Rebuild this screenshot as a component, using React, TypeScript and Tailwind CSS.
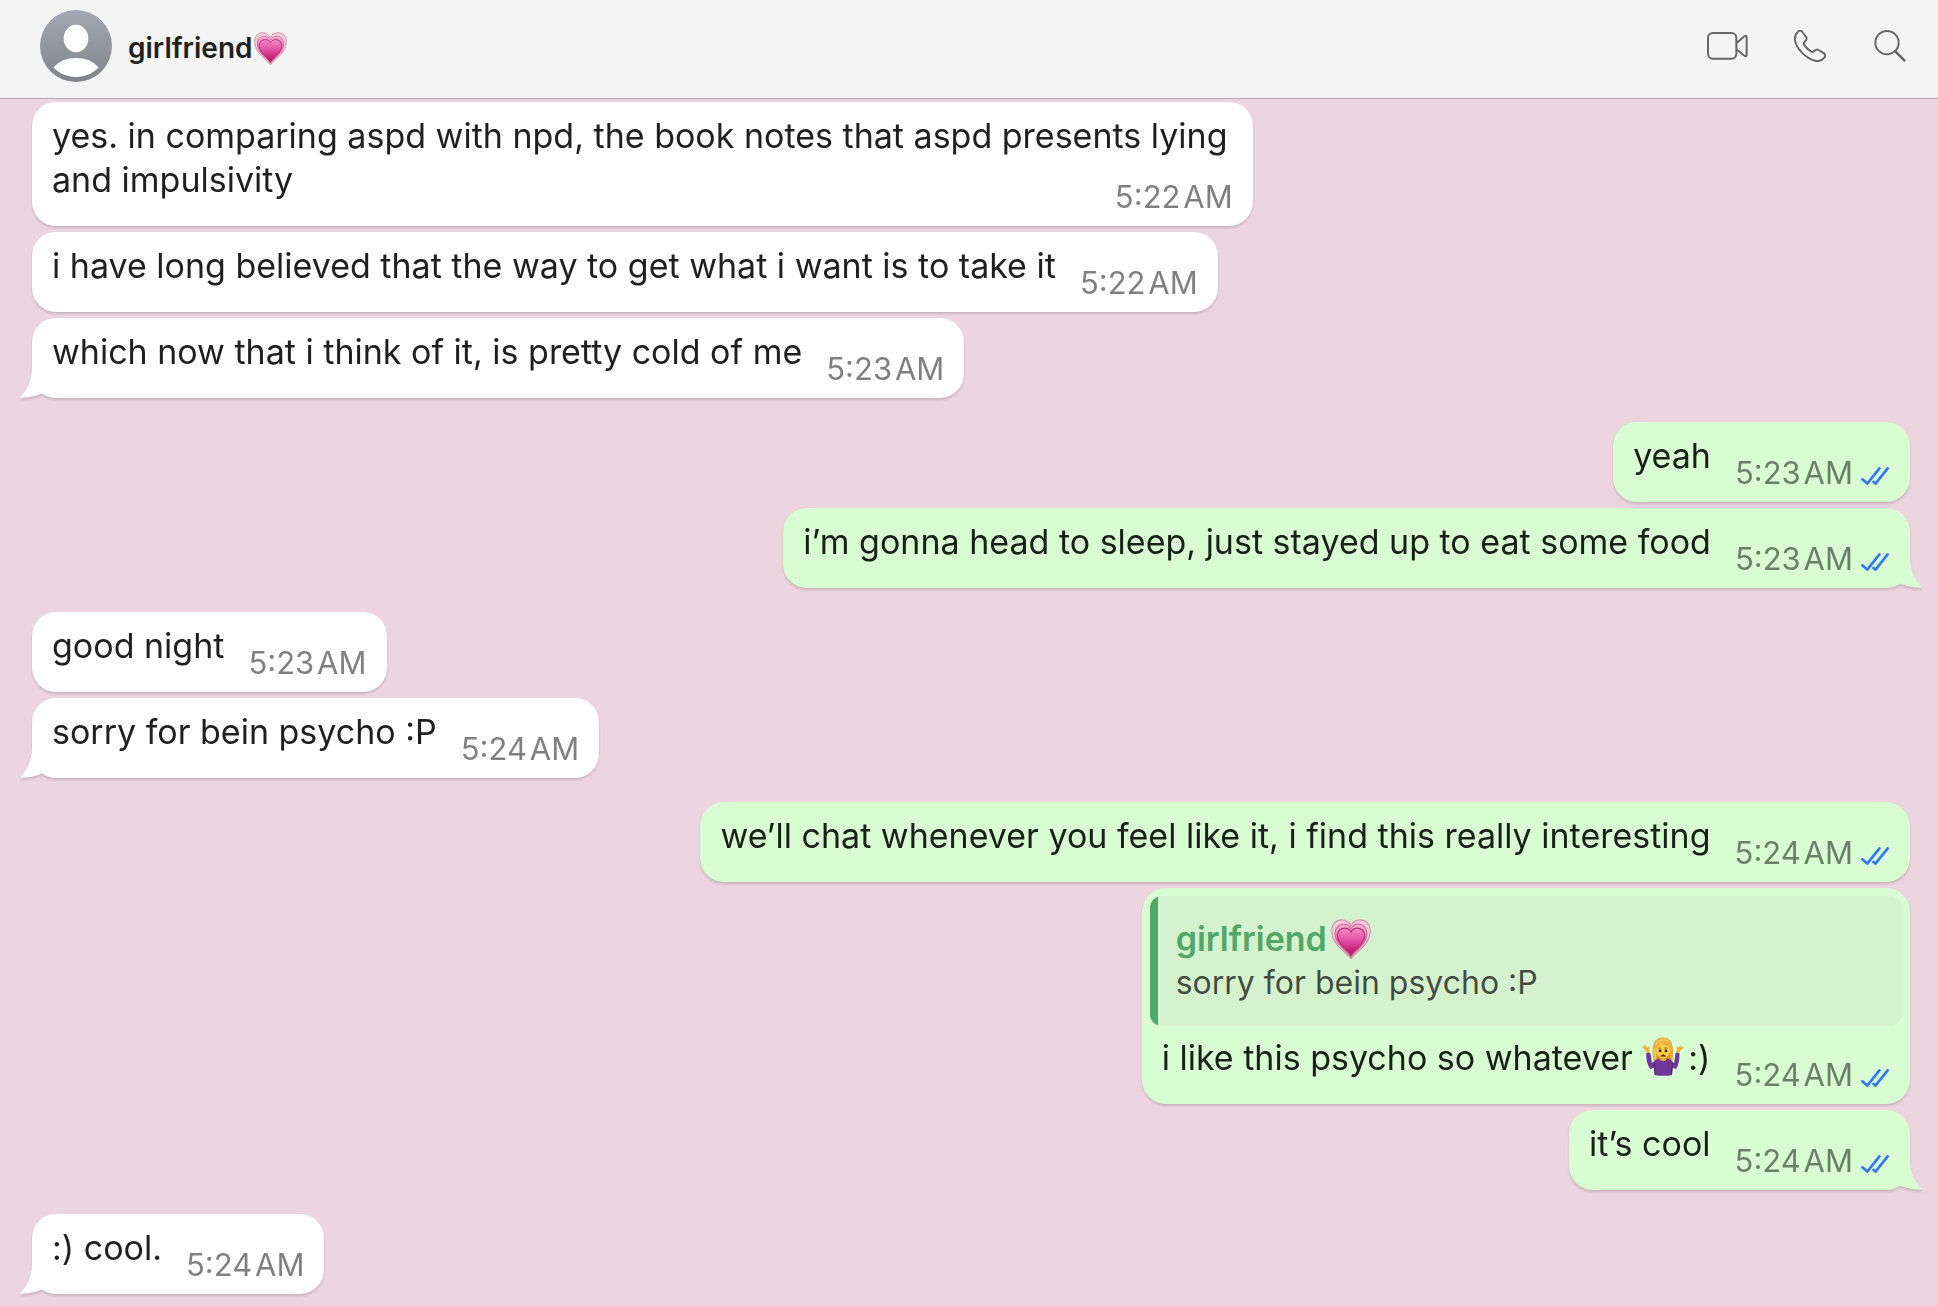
import React from "react";

type Message = {
  from: "me" | "them";
  text: React.ReactNode;
  time: string;
  tail?: boolean;
  wraps?: boolean;
  quote?: { text: string };
};

function GrowingHeart({ className }: { className: string }) {
  return (
    <svg viewBox="0 0 100 100" className={className} role="img" aria-label="growing heart">
      <defs>
        <linearGradient id="heartFill" x1="0" y1="0" x2="0" y2="1">
          <stop offset="0" stopColor="#f58cc6" />
          <stop offset="0.5" stopColor="#e0489f" />
          <stop offset="1" stopColor="#b50b55" />
        </linearGradient>
        <linearGradient id="heartMiddle" x1="0" y1="0" x2="0" y2="1">
          <stop offset="0" stopColor="#f3b4d2" />
          <stop offset="1" stopColor="#cc2f78" />
        </linearGradient>
      </defs>
      <path d="M50 99C41 84 2 66 2 30C2 12 13 2 27 2C38 2 46 8 50 17C54 8 62 2 73 2C87 2 98 12 98 30C98 66 59 84 50 99Z" fill="#f0cddb" stroke="#d592af" strokeWidth="3" />
      <path d="M50 95C42 80 10 64 10 36C10 21 20 13 31 13C40 13 47 18 50 25C53 18 60 13 69 13C80 13 90 21 90 36C90 64 58 80 50 95Z" fill="url(#heartMiddle)" stroke="#cf6fa0" strokeWidth="3" />
      <path d="M50 91C43 77 16 64 16 41C16 29 25 23 34 23C42 23 47 27 50 33C53 27 58 23 66 23C75 23 84 29 84 41C84 64 57 77 50 91Z" fill="url(#heartFill)" stroke="#c12c7c" strokeWidth="3" />
    </svg>
  );
}

function ShrugWoman({ className }: { className: string }) {
  return (
    <svg viewBox="0 0 128 118" className={className} role="img" aria-label="woman shrugging">
      <path d="M38 82C31 60 29 25 41 11C52 -2 80 -1 88 14C98 32 94 64 91 82Z" fill="#d9962d" />
      <path d="M13 49C18 45 24 46 26 50L30 79L43 69C52 62 78 62 86 69L98 79L102 50C105 46 110 46 114 49C115 66 111 86 104 97L94 93L91 115C76 119 53 119 39 115L36 93L25 97C16 84 12 66 13 49Z" fill="#713699" />
      <path d="M40 115L38 79M90 115L92 79" stroke="#4c2372" strokeWidth="3" fill="none" />
      <path d="M54 56H75V68C70 75 59 75 54 68Z" fill="#e8a92e" />
      <ellipse cx="64" cy="39" rx="22" ry="25" fill="#fccb47" />
      <path d="M36 73C32 51 30 18 46 7C60 -3 80 1 87 14C96 32 93 57 90 72C84 56 89 36 80 25C70 26 61 21 57 15C56 26 48 31 44 35C45 52 47 65 36 73Z" fill="#eab13e" />
      <path d="M42 23C49 9 66 4 79 12M39 38C39 48 41 60 39 65" stroke="#ffe18a" strokeWidth="3" fill="none" />
      <path d="M50 35Q54 31 59 34M69 34Q74 31 78 35" stroke="#805221" strokeWidth="3" fill="none" />
      <circle cx="55" cy="42" r="4" fill="#35251c" />
      <circle cx="73" cy="42" r="4" fill="#35251c" />
      <path d="M57 58Q64 49 72 58Z" fill="#4c2b1f" stroke="#4c2b1f" strokeWidth="2" />
      <path d="M15 47L10 39L1 31C1 27 5 27 10 31L5 24C7 22 10 24 14 30L16 34C19 28 23 28 23 32L21 40L25 47Z" fill="#f0b132" />
      <path d="M113 47L118 39L127 33C127 29 123 28 118 32L121 26C118 24 115 27 112 32C110 28 106 28 105 33L107 39L103 47Z" fill="#f0b132" />
    </svg>
  );
}

function ReadChecks() {
  return (
    <svg viewBox="0 0 85 54" className="mr-px mb-0.5 ml-2 h-[18px] w-7 shrink-0" fill="none" stroke="#3277f3" strokeWidth="8" strokeLinecap="round" strokeLinejoin="round" role="img" aria-label="Read">
      <path d="M4 37L19 50L56 4" />
      <path d="M38 45L44 50L81 4" />
    </svg>
  );
}

function Tail({ mine }: { mine: boolean }) {
  return (
    <svg
      viewBox="0 0 36 30"
      className={mine ? "absolute -right-3 bottom-0 h-[30px] w-9 -scale-x-100 fill-[#d8fdd2]" : "absolute bottom-0 -left-3 h-[30px] w-9 fill-white"}
      aria-hidden="true"
    >
      <path d="M12 0C12 12 7 22 0 29.5C8 30 16 28 21 26L36 14V0Z" />
    </svg>
  );
}

function Bubble({ message }: { message: Message }) {
  const mine = message.from === "me";
  return (
    <article
      className={`relative max-w-[65%] rounded-3xl drop-shadow-[0_2px_1px_rgba(90,60,75,0.22)] ${mine ? "self-end bg-[#d8fdd2]" : "self-start bg-white"}`}
    >
      {message.tail && <Tail mine={mine} />}
      {message.quote && (
        <div className="px-2 pt-2">
          <blockquote className="overflow-hidden rounded-xl bg-[#d5f2ce]">
            <div className="border-l-8 border-[#51a866] pt-[21px] pb-[21px] pl-[18px]">
              <p className="flex items-center text-[34px] leading-[44px] font-semibold text-[#51a866]">
                girlfriend
                <GrowingHeart className="ml-1 size-10" />
              </p>
              <p className="text-[32px] leading-[44px] text-black/70">{message.quote.text}</p>
            </div>
          </blockquote>
        </div>
      )}
      <div
        className={`relative px-5 ${message.wraps ? "grid" : "flex items-end justify-between gap-6"} ${message.quote ? "pt-2.5" : "pt-3"}`}
      >
        <p className="col-start-1 row-start-1 pb-6 text-[34px] leading-[44px] text-black/88">{message.text}</p>
        <div className="col-start-1 row-start-1 flex items-end self-end justify-self-end pb-[9px] whitespace-nowrap">
          <time className="text-[31px] leading-10 text-black/50">{message.time}{"\u200A"}AM</time>
          {mine && (
            <span className="pb-1.5">
              <ReadChecks />
            </span>
          )}
        </div>
      </div>
    </article>
  );
}

const groups: Message[][] = [
  [
    { from: "them", text: "yes. in comparing aspd with npd, the book notes that aspd presents lying and impulsivity", time: "5:22", wraps: true },
    { from: "them", text: "i have long believed that the way to get what i want is to take it", time: "5:22" },
    { from: "them", text: "which now that i think of it, is pretty cold of me", time: "5:23", tail: true },
  ],
  [
    { from: "me", text: "yeah", time: "5:23" },
    { from: "me", text: "i’m gonna head to sleep, just stayed up to eat some food", time: "5:23", tail: true },
  ],
  [
    { from: "them", text: "good night", time: "5:23" },
    { from: "them", text: "sorry for bein psycho :P", time: "5:24", tail: true },
  ],
  [
    { from: "me", text: "we’ll chat whenever you feel like it, i find this really interesting", time: "5:24" },
    {
      from: "me",
      text: (
        <>
          i like this psycho so whatever <ShrugWoman className="-mt-2 mr-1 inline h-[39px] w-[42px]" />
          :)
        </>
      ),
      time: "5:24",
      quote: { text: "sorry for bein psycho :P" },
    },
    { from: "me", text: "it’s cool", time: "5:24", tail: true },
  ],
  [{ from: "them", text: ":) cool.", time: "5:24", tail: true }],
];

function Header() {
  return (
    <header className="flex items-start justify-between border-b border-[#b9a9b1] bg-[#f4f4f4] pt-2.5 pr-8 pb-4 pl-10">
      <div className="flex items-center gap-4">
        <svg viewBox="0 0 72 72" className="size-[72px]" role="img" aria-label="Contact photo">
          <defs>
            <linearGradient id="avatar" x1="0" y1="0" x2="0" y2="1">
              <stop offset="0" stopColor="#a4a8b4" />
              <stop offset="1" stopColor="#808389" />
            </linearGradient>
          </defs>
          <circle cx="36" cy="36" r="36" fill="url(#avatar)" />
          <ellipse cx="36" cy="28.500" rx="12.300" ry="13.700" fill="#fff" />
          <path d="M13.500 57.500C19 51 27 48 36 48C45 48 53 51 58.500 57.500C52.500 63.500 45 67 36 67C27 67 19.500 63.500 13.500 57.500Z" fill="#fff" />
        </svg>
        <h1 className="flex items-center pt-1 text-[28px] leading-8 font-semibold text-[#1f1f1f]">
          girlfriend
          <GrowingHeart className="ml-0.5 size-[33px]" />
        </h1>
      </div>
      <nav className="flex h-[72px] items-center text-[#666]" aria-label="Chat actions">
        <button type="button" aria-label="Video call" className="mr-[46px]">
          <svg viewBox="0 0 123 84" className="h-7 w-[41px]" fill="none" stroke="currentColor" strokeWidth="6" strokeLinejoin="round">
            <rect x="3" y="3" width="85" height="77" rx="14" />
            <path d="M88 34L112 13Q119 8 119 17V67Q119 76 112 71L88 52" />
          </svg>
        </button>
        <button type="button" aria-label="Voice call" className="mr-12">
          <svg viewBox="0 0 96 96" className="size-8" fill="none" stroke="currentColor" strokeWidth="6" strokeLinejoin="round">
            <path d="M12 5C16 1 22 2 25 6L36 21C38 24 38 28 36 31L30 38C29 40 29 42 30 44C36 53 44 61 52 65C54 66 56 66 58 65L65 60C68 58 71 58 74 60L90 70C94 73 95 78 91 83C84 92 76 94 66 93C36 86 6 56 3 30C2 20 5 11 12 5Z" />
          </svg>
        </button>
        <button type="button" aria-label="Search">
          <svg viewBox="0 0 96 96" className="size-8" fill="none" stroke="currentColor" strokeLinecap="round">
            <circle cx="39" cy="38" r="35" strokeWidth="6" />
            <path d="M64 64L91 91" strokeWidth="8" />
          </svg>
        </button>
      </nav>
    </header>
  );
}

export default function App() {
  return (
    <div className="flex min-h-screen flex-col bg-[#ecd5df] font-['Inter','Liberation_Sans',sans-serif]">
      <Header />
      <main className="flex flex-col gap-6 pt-[3px] pr-7 pb-3 pl-8">
        {groups.map((group, g) => (
          <section key={g} className="flex flex-col gap-1.5">
            {group.map((message, m) => (
              <Bubble key={m} message={message} />
            ))}
          </section>
        ))}
      </main>
    </div>
  );
}
